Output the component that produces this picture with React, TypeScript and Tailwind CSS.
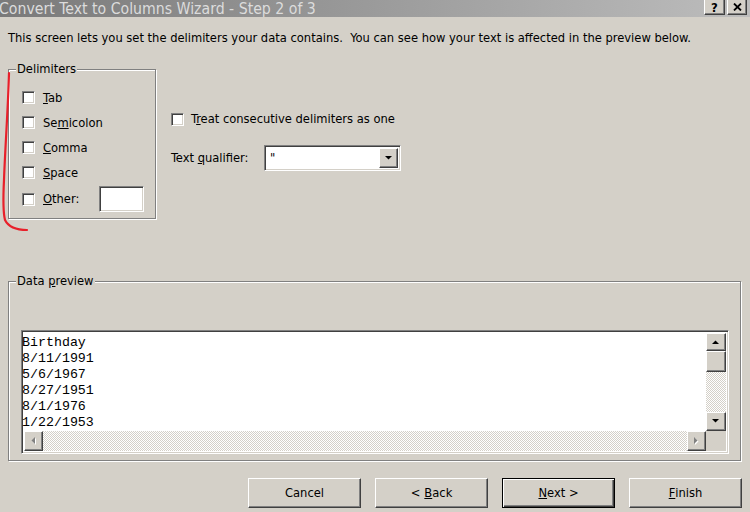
import React from "react";

const raised =
  "bg-[#d4d0c8] border border-t-white border-l-white border-r-[#404040] border-b-[#404040] shadow-[inset_-1px_-1px_0_#808080]";
const sunken =
  "border border-t-[#808080] border-l-[#808080] border-b-white border-r-white shadow-[inset_1px_1px_0_#404040,inset_-1px_-1px_0_#d4d0c8]";
const track =
  "bg-[repeating-conic-gradient(#d4d0c8_0_25%,#ffffff_0_50%)] bg-[length:2px_2px]";

function Check() {
  return <span className={`block w-[13px] h-[13px] bg-white shrink-0 ${sunken}`} />;
}

function Tri({ dir, grey }: { dir: "up" | "down" | "left" | "right"; grey?: boolean }) {
  const pts: Record<string, string> = {
    up: "0,4 7,4 3.5,0.5",
    down: "0,0 7,0 3.5,3.5",
    left: "4,0 4,7 0.5,3.5",
    right: "0,0 0,7 3.5,3.5",
  };
  const horiz = dir === "left" || dir === "right";
  return (
    <svg width={horiz ? 5 : 8} height={horiz ? 8 : 5} viewBox={horiz ? "0 0 5 8" : "0 0 8 5"}>
      {grey && <polygon points={pts[dir]} fill="#ffffff" transform="translate(1,1)" />}
      <polygon points={pts[dir]} fill={grey ? "#808080" : "#000000"} />
    </svg>
  );
}

function Row({ label }: { label: React.ReactNode }) {
  return (
    <div className="h-[25px] flex items-center pl-[13px]">
      <Check />
      <span className="ml-[8px]">{label}</span>
    </div>
  );
}

export default function App() {
  return (
    <div className="w-[750px] h-[512px] bg-[#d4d0c8] flex flex-col relative overflow-hidden font-['DejaVu_Sans_Condensed','Liberation_Sans',sans-serif] text-[12.8px] text-black">
      {/* title bar */}
      <div className="h-[17px] bg-gradient-to-r from-[#7a7a7a] to-[#bdbdbd] flex items-start justify-between">
        <span className="text-[15.7px] leading-[17px] text-[#dcdcdc] -ml-[1px]">
          Convert Text to Columns Wizard - Step 2 of 3
        </span>
        <div className="flex gap-[2px] mr-[3px]">
          <div className="w-[21px] h-[15px] bg-[#d4d0c8] border-l border-l-white border-r border-r-[#404040] border-b border-b-[#404040] shadow-[inset_-1px_-1px_0_#808080] flex items-center justify-center text-[13px] font-bold leading-none">
            ?
          </div>
          <div className="w-[20px] h-[15px] bg-[#d4d0c8] border-l border-l-white border-r border-r-[#404040] border-b border-b-[#404040] shadow-[inset_-1px_-1px_0_#808080] flex items-center justify-center">
            <svg width="9" height="8" viewBox="0 0 9 8">
              <path d="M1 0.5 L8 7.5 M8 0.5 L1 7.5" stroke="#000" strokeWidth="1.8" />
            </svg>
          </div>
        </div>
      </div>

      {/* instruction */}
      <div className="mt-[14px] pl-[8px] leading-[14px]">
        This screen lets you set the delimiters your data contains.&nbsp; You can see how your text is affected in the preview below.
      </div>

      {/* top section */}
      <div className="mt-[17px] ml-[8px] flex">
        <fieldset className="w-[148px] h-[157px] border border-[#808080] shadow-[inset_1px_1px_0_#fff,1px_1px_0_#fff]">
          <legend className="ml-[7px] px-[1px] bg-[#d4d0c8] leading-[14px]">Delimiters</legend>
          <div className="pt-[9px] flex flex-col">
            <Row label={<><u>T</u>ab</>} />
            <Row label={<>Se<u>m</u>icolon</>} />
            <Row label={<><u>C</u>omma</>} />
            <Row label={<><u>S</u>pace</>} />
            <div className="h-[28px] flex items-center pl-[13px]">
              <Check />
              <span className="ml-[8px]">
                <u>O</u>ther:
              </span>
              <div className={`ml-auto mr-[11px] w-[45px] h-[26px] bg-white ${sunken}`} />
            </div>
          </div>
        </fieldset>

        <div className="ml-[15px] flex flex-col">
          <div className="mt-[49px] h-[16px] flex items-center">
            <Check />
            <span className="ml-[7px]">
              T<u>r</u>eat consecutive delimiters as one
            </span>
          </div>
          <div className="mt-[18px] flex items-center">
            <span className="w-[93px]">
              Text <u>q</u>ualifier:
            </span>
            <div className={`w-[137px] h-[26px] bg-white flex items-center ${sunken} p-[2px]`}>
              <span className="flex-1 pl-[3px] leading-none">"</span>
              <div className={`w-[19px] h-full flex items-center justify-center ${raised}`}>
                <Tri dir="down" />
              </div>
            </div>
          </div>
        </div>
      </div>

      {/* data preview */}
      <fieldset className="mt-[55px] ml-[8px] w-[733px] h-[187px] border border-[#808080] shadow-[inset_1px_1px_0_#fff,1px_1px_0_#fff]">
        <legend className="ml-[7px] px-[1px] bg-[#d4d0c8] leading-[14px]">
          Data <u>p</u>review
        </legend>
        <div className={`mt-[42px] ml-[12px] w-[708px] h-[124px] bg-white ${sunken} p-[2px]`}>
          <div className="w-full h-full grid grid-cols-[1fr_20px] grid-rows-[1fr_20px]">
            <div className="pt-[2px] -ml-[2px] font-['Liberation_Mono',monospace] text-[13.3px] leading-[16px] overflow-hidden">
              <div>Birthday</div>
              <div>8/11/1991</div>
              <div>5/6/1967</div>
              <div>8/27/1951</div>
              <div>8/1/1976</div>
              <div>1/22/1953</div>
            </div>
            <div className={`flex flex-col ${track}`}>
              <div className={`h-[18px] flex items-center justify-center ${raised}`}>
                <Tri dir="up" />
              </div>
              <div className={`h-[21px] ${raised}`} />
              <div className="flex-1" />
              <div className={`h-[19px] flex items-center justify-center ${raised}`}>
                <Tri dir="down" />
              </div>
            </div>
            <div className={`flex ${track}`}>
              <div className={`w-[19px] flex items-center justify-center ${raised}`}>
                <Tri dir="left" grey />
              </div>
              <div className="flex-1" />
              <div className={`w-[19px] flex items-center justify-center ${raised}`}>
                <Tri dir="right" grey />
              </div>
            </div>
            <div className="bg-[#d4d0c8]" />
          </div>
        </div>
      </fieldset>

      {/* buttons */}
      <div className="mt-[17px] mr-[8px] flex justify-end gap-[14px]">
        <div className={`w-[113px] h-[30px] flex items-center justify-center ${raised}`}>Cancel</div>
        <div className={`w-[113px] h-[30px] flex items-center justify-center ${raised}`}>
          &lt; <u className="ml-[4px]">B</u>ack
        </div>
        <div className="w-[113px] h-[30px] flex items-center justify-center bg-[#d4d0c8] border border-black shadow-[inset_1px_1px_0_#fff,inset_-1px_-1px_0_#404040,inset_-2px_-2px_0_#808080]">
          <u>N</u>ext &gt;
        </div>
        <div className={`w-[113px] h-[30px] flex items-center justify-center ${raised}`}>
          <u>F</u>inish
        </div>
      </div>

      {/* red annotation */}
      <svg className="absolute left-0 top-0 pointer-events-none" width="750" height="512">
        <path
          d="M9 73 C8 110, 5 150, 4 180 C3 200, 3 212, 5 220 C9 228, 18 230, 27 230"
          fill="none"
          stroke="#e8202a"
          strokeWidth="2.2"
          strokeLinecap="round"
        />
      </svg>
    </div>
  );
}
